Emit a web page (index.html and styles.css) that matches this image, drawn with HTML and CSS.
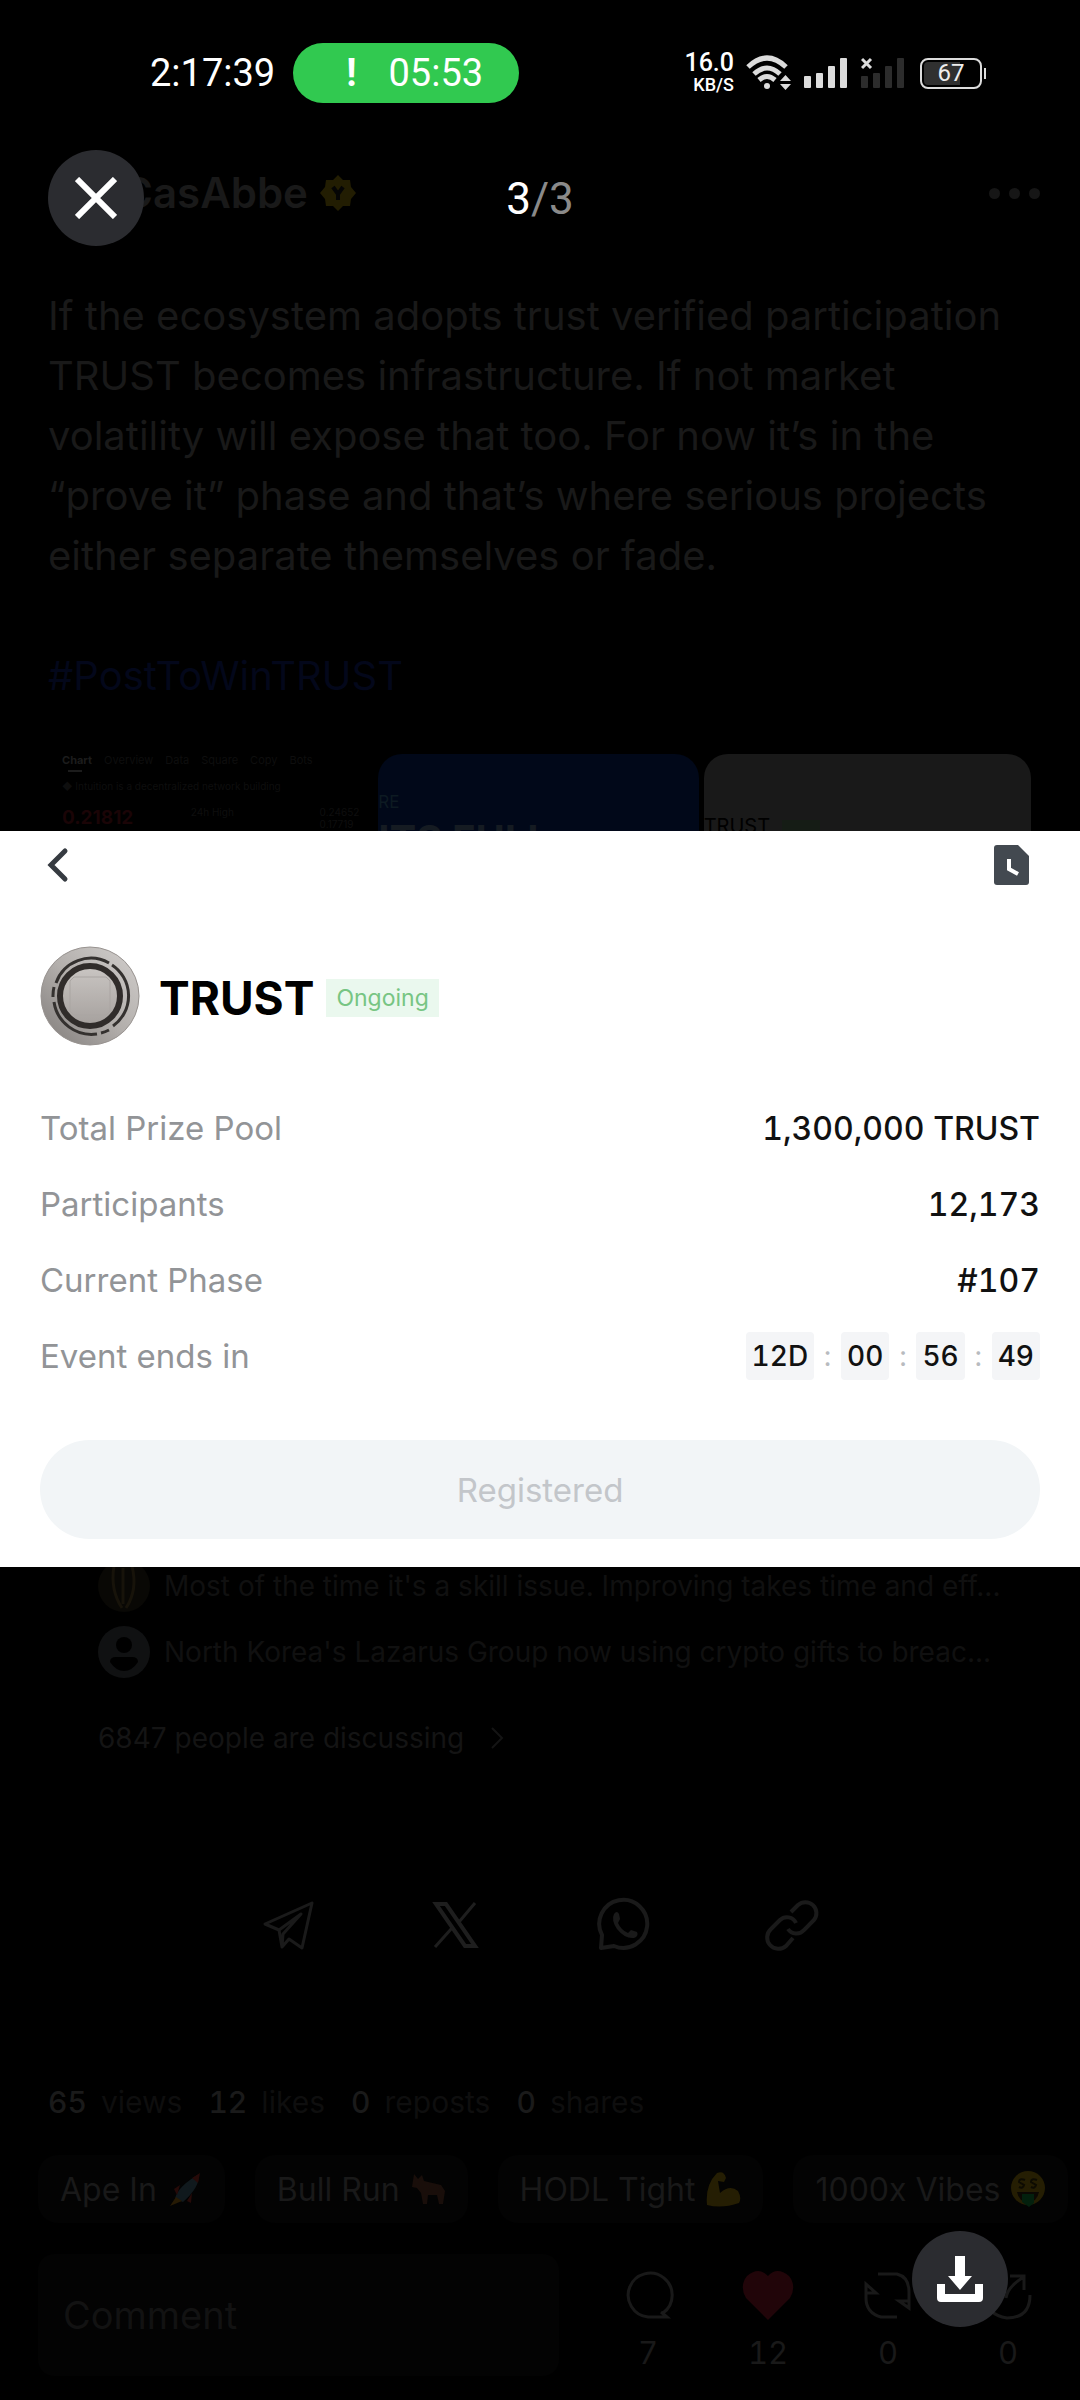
FILE: index.html
```
<!DOCTYPE html>
<html lang="en">
<head>
<meta charset="UTF-8">
<meta name="viewport" content="width=device-width, initial-scale=1">
<title>Post image 3/3</title>
<link rel="stylesheet" href="styles.css">
</head>
<body>

<div class="statusbar">
  <span class="clock">2:17:39</span>
  <span class="call"><b>!</b><span>05:53</span></span>
  <div class="signals">
    <span class="speed"><b>16.0</b><small>KB/S</small></span>
    <svg class="wifi" viewBox="0 0 46 36" width="46" height="36">
      <g fill="none" stroke="#dcdcdc" stroke-width="5">
        <path d="M2 12 Q21 -6 40 12"/>
        <path d="M8 19 Q21 7 34 19"/>
        <path d="M13 25 Q21 18 29 25"/>
      </g>
      <circle cx="21" cy="31" r="3" fill="#dcdcdc"/>
      <path d="M34 26 L39.500 20 L45 26 Z M34 29 L39.500 35 L45 29 Z" fill="#dcdcdc"/>
    </svg>
    <svg viewBox="0 0 44 32" width="44" height="32" fill="#dcdcdc">
      <rect x="0" y="19" width="7" height="12" rx="1"/><rect x="12" y="16" width="7" height="15" rx="1"/>
      <rect x="24" y="9" width="7" height="22" rx="1"/><rect x="36" y="1" width="7" height="30" rx="1"/>
    </svg>
    <svg class="sim2" viewBox="0 0 44 32" width="44" height="32" fill="#2c2c2c">
      <rect x="0" y="19" width="7" height="12" rx="1"/><rect x="12" y="16" width="7" height="15" rx="1"/>
      <rect x="24" y="9" width="7" height="22" rx="1"/><rect x="36" y="1" width="7" height="30" rx="1"/>
      <path d="M1 2 L10 11 M10 2 L1 11" stroke="#dcdcdc" stroke-width="3"/>
    </svg>
    <span class="battery">67</span>
  </div>
</div>

<header class="topbar">
  <button class="round close" aria-label="Close">
    <svg viewBox="0 0 42 42" width="42" height="42"><path d="M2 2 L40 40 M40 2 L2 40" stroke="#fff" stroke-width="6"/></svg>
  </button>
  <div class="author">
    <span>CasAbbe</span>
    <svg viewBox="0 0 36 36" width="36" height="36">
      <path d="M18 0 L23 5 L30 5 L31 12 L36 18 L31 24 L30 31 L23 31 L18 36 L13 31 L6 31 L5 24 L0 18 L5 12 L6 5 L13 5 Z" fill="#221d02"/>
      <path d="M13 12 L18 19 L23 12 M18 19 V25" fill="none" stroke="#050505" stroke-width="4"/>
    </svg>
  </div>
  <div class="counter">3<span>/3</span></div>
  <button class="more" aria-label="More"><i></i><i></i><i></i></button>
</header>

<main>
<section class="post">
  <p>If the ecosystem adopts trust verified participation<br>
  TRUST becomes infrastructure. If not market<br>
  volatility will expose that too. For now it’s in the<br>
  “prove it” phase and that’s where serious projects<br>
  either separate themselves or fade.</p>
  <p><a href="#tag">#PostToWinTRUST</a></p>
</section>

<div class="thumbs">
  <div class="thumb chart">
    <div class="tabs"><b>Chart</b><span>Overview</span><span>Data</span><span>Square</span><span>Copy</span><span>Bots</span></div>
    <div class="mark"></div>
    <div class="notice">◆ Intuition is a decentralized network building</div>
    <div class="price"><b>0.21812</b><span>24h High</span><span>0.24652<br>0.17719</span></div>
  </div>
  <div class="thumb blue"><span>RE</span><b>ITS FULL</b></div>
  <div class="thumb grey"><span>TRUST</span><i></i></div>
</div>

<section class="sheet">
  <div class="sheet-nav">
    <button aria-label="Back">
      <svg viewBox="0 0 36 41" width="36" height="41"><path d="M25 7 L11 21 L25 35" fill="none" stroke="#363b41" stroke-width="5" stroke-linecap="round"/></svg>
    </button>
    <button aria-label="History">
      <svg viewBox="0 0 36 41" width="36" height="41"><path d="M3 1 H24 L35 12 V38 Q35 41 32 41 H3 Q0 41 0 38 V4 Q0 1 3 1 Z" fill="#434950"/><path d="M15 15 V25 L24 30" fill="none" stroke="#fff" stroke-width="4"/></svg>
    </button>
  </div>

  <div class="token">
    <svg viewBox="0 0 100 100" width="100" height="100">
      <defs>
        <linearGradient id="metal" x1="1" y1="0" x2="0" y2="1"><stop offset="0" stop-color="#d2cfcd"/><stop offset=".5" stop-color="#b3afac"/><stop offset="1" stop-color="#7f7b79"/></linearGradient>
        <linearGradient id="core" x1="0" y1="0" x2="0" y2="1"><stop offset="0" stop-color="#cac6c3"/><stop offset="1" stop-color="#a5a09d"/></linearGradient>
      </defs>
      <circle cx="50" cy="50" r="49" fill="url(#metal)" stroke="#989390"/>
      <path d="M16 37 A37 37 0 0 1 69 17 M72 19 A37 37 0 0 1 73 80 M69 84 A39 39 0 0 1 61 87 M57 88 A38 38 0 0 1 14 56 M13 51 A37 37 0 0 1 14 41" fill="none" stroke="#34312f" stroke-width="3"/>
      <circle cx="50" cy="50" r="30" fill="url(#core)" stroke="#302c2a" stroke-width="6"/>
      <path d="M34 31 H66 L70 35 V65 L66 69 H34 L30 65 V35 Z" fill="none" stroke="#aaa5a2"/>
    </svg>
    <h1>TRUST</h1>
    <span class="badge">Ongoing</span>
  </div>

  <dl class="facts">
    <div><dt>Total Prize Pool</dt><dd>1,300,000 TRUST</dd></div>
    <div><dt>Participants</dt><dd>12,173</dd></div>
    <div><dt>Current Phase</dt><dd>#107</dd></div>
    <div><dt>Event ends in</dt><dd class="timer"><b>12D</b><i>:</i><b>00</b><i>:</i><b>56</b><i>:</i><b>49</b></dd></div>
  </dl>

  <button class="registered" disabled>Registered</button>
</section>

<section class="comments">
  <div class="comment">
    <svg viewBox="0 0 52 52" width="52" height="52"><circle cx="26" cy="26" r="26" fill="#090805"/><path d="M16 6 Q12 30 24 48 M34 6 Q40 30 28 48 M25 8 V44" fill="none" stroke="#17130a" stroke-width="3"/></svg>
    <span>Most of the time it's a skill issue. Improving takes time and eff...</span>
  </div>
  <div class="comment">
    <svg viewBox="0 0 52 52" width="52" height="52"><circle cx="26" cy="26" r="26" fill="#101112"/><circle cx="26" cy="19" r="8"/><path d="M12 36 Q12 31 18 31 H34 Q40 31 40 36 Q34 45 26 45 Q18 45 12 36 Z"/></svg>
    <span>North Korea's Lazarus Group now using crypto gifts to breac...</span>
  </div>
  <a class="discuss" href="#discuss">6847 people are discussing
    <svg viewBox="0 0 14 24" width="14" height="24"><path d="M2 2 L12 12 L2 22" fill="none" stroke="#141414" stroke-width="2"/></svg>
  </a>
</section>

<nav class="share">
  <a href="#telegram" aria-label="Telegram"><svg viewBox="0 0 56 56"><path d="M52 6 L5 27 L19 33 L22 50 L29 42 L42 51 Z M19 33 L41 17 L23 37 L22 50" fill="none" stroke="#1a1a1a" stroke-width="3" stroke-linejoin="round"/></svg></a>
  <a href="#x" aria-label="X"><svg viewBox="0 0 56 56"><path d="M8 7 H18 L47 49 H37 Z" fill="none" stroke="#1e1e1e" stroke-width="4"/><path d="M47 6 L31 25 M24 31 L7 50" stroke="#1e1e1e" stroke-width="3"/></svg></a>
  <a href="#whatsapp" aria-label="WhatsApp"><svg viewBox="0 0 56 56"><path d="M5 51 L6 38 A24 24 0 1 1 18 49 Z" fill="none" stroke="#1a1a1a" stroke-width="4" stroke-linejoin="round"/><path d="M18 17 Q21 13 23 17 L24 22 L22 26 Q25 33 32 36 L35 33 L41 35 Q43 39 38 41 Q29 42 21 32 Q15 23 18 17 Z" fill="#1a1a1a"/></svg></a>
  <a href="#link" aria-label="Copy link"><svg viewBox="0 0 56 56"><path d="M27 15 L34 8 A11 11 0 0 1 50 23 L40 33 A10 10 0 0 1 24 32 M32 26 A10 10 0 0 0 16 23 L7 32 A11 11 0 0 0 22 49 L29 41" fill="none" stroke="#1a1a1a" stroke-width="4"/></svg></a>
</nav>

<div class="stats">
  <span><b>65</b> views</span><span><b>12</b> likes</span><span><b>0</b> reposts</span><span><b>0</b> shares</span>
</div>

<div class="chips">
  <button>Ape In
    <svg viewBox="0 0 36 36"><path d="M8 28 Q10 16 32 3 Q33 16 16 31 Z" fill="#10191d"/><path d="M25 7 L33 2 L31 12 Z M7 18 L13 14 L10 24 Z M20 30 L25 22 L24 32 Z" fill="#260a08"/><path d="M9 26 L3 35 L15 30 Z" fill="#261a04"/></svg>
  </button>
  <button>Bull Run
    <svg viewBox="0 0 36 36"><path d="M4 3 L8 8 L12 4 L14 10 L31 14 L35 20 L33 33 H29 L27 24 L18 24 L17 33 H13 L11 22 L7 17 L2 16 Z" fill="#190e0a"/></svg>
  </button>
  <button>HODL Tight
    <svg viewBox="0 0 36 36"><path d="M12 2 Q19 -1 21 7 L19 11 L13 10 L15 22 Q25 13 33 20 Q37 27 34 32 Q17 38 2 34 Q0 14 12 2 Z" fill="#251e03"/></svg>
  </button>
  <button>1000x Vibes
    <svg viewBox="0 0 36 36"><circle cx="18" cy="17" r="17" fill="#251e03"/><path d="M7 21 H29 Q27 31 18 31 Q9 31 7 21 Z" fill="#0b0803"/><path d="M12 23 H24 V32 L19 36 L12 31 Z" fill="#03200d"/><path d="M15 9 Q9 7 9 11 L14 14 Q13 18 9 16 M27 9 Q21 7 21 11 L26 14 Q25 18 21 16" fill="none" stroke="#0d0b02" stroke-width="2"/></svg>
  </button>
</div>

<div class="bottombar">
  <input type="text" placeholder="Comment" aria-label="Comment">
  <button><svg viewBox="0 0 54 50"><path d="M42 43 A22 22 0 1 0 27 47 H46 L40 42" fill="none" stroke="#191919" stroke-width="3"/></svg>7</button>
  <button><svg viewBox="0 0 54 50"><path d="M27 50 L5 28 Q-2 16 6 6 Q18 -4 27 6 Q36 -4 48 6 Q56 16 49 28 Z" fill="#210509"/></svg>12</button>
  <button><svg viewBox="0 0 54 50"><path d="M17 4 H36 Q48 7 48 22 V38 L38 31 H47 M36 47 H20 Q5 43 5 28 V14 L15 23 H6" fill="none" stroke="#191919" stroke-width="3"/></svg>0</button>
  <button><svg viewBox="0 0 54 50"><path d="M25 28 Q27 16 43 7 M29 6 H43 V20 M49 25 Q49 48 26 48 Q5 45 5 25 Q7 10 20 5" fill="none" stroke="#191919" stroke-width="3"/></svg>0</button>
</div>
</main>

<button class="round download" aria-label="Download">
  <svg viewBox="0 0 46 46" width="46" height="46" fill="#fff"><path d="M18 0 H28 V20 H35 L23 34 L11 20 H18 Z"/><path d="M0 28 H8 V38 H38 V28 H46 V42 Q46 46 42 46 H4 Q0 46 0 42 Z"/></svg>
</button>

</body>
</html>
```
FILE: styles.css
```
* {
    box-sizing: border-box;
}

body {
    position: relative;
    margin: 0;
    background: #000;
    color: #191919;
    font-family: Inter, "Liberation Sans", sans-serif;
    overflow-x: hidden;
}

button {
    margin: 0;
    padding: 0;
    border: 0;
    background: none;
    color: inherit;
    font: inherit;
}

a {
    color: inherit;
    text-decoration: none;
}

svg {
    display: block;
    flex-shrink: 0;
}

p, h1, dl, dd {
    margin: 0;
}

/* status bar */
.statusbar {
    display: flex;
    align-items: center;
    height: 146px;
    padding: 0 98px 0 150px;
    color: #fff;
    font: 38px Roboto, sans-serif;
}

.call {
    display: flex;
    align-items: center;
    gap: 32px;
    height: 60px;
    margin-left: 18px;
    padding: 0 36px 0 53px;
    border-radius: 30px;
    background: #31c950;
}

.signals {
    display: flex;
    align-items: center;
    gap: 12px;
    margin-left: auto;
}

.speed {
    display: flex;
    flex-direction: column;
    align-items: flex-end;
    font-size: 25px;
    line-height: 24px;
}

.speed b {
    font-weight: 500;
}

.speed small {
    font-size: 18px;
    font-weight: 500;
    line-height: 20px;
}

.sim2 {
    margin: 0 3px 0 1px;
}

.battery {
    position: relative;
    width: 62px;
    height: 31px;
    border: 2px solid #dcdcdc;
    border-radius: 8px;
    background: linear-gradient(to right, #303030 67%, #000 67%) content-box;
    padding: 2px;
    color: #eee;
    font-size: 24px;
    line-height: 23px;
    text-align: center;
}

.battery::after {
    content: "";
    position: absolute;
    top: 8px;
    right: -6px;
    width: 2px;
    height: 11px;
    background: #dcdcdc;
}

/* viewer header */
.topbar {
    position: relative;
    display: grid;
    grid-template-columns: 1fr auto 1fr;
    align-items: center;
    height: 104px;
    padding: 0 40px;
}

.round {
    position: absolute;
    display: flex;
    align-items: center;
    justify-content: center;
    width: 96px;
    height: 96px;
    border-radius: 50%;
    background: #2b2c30;
}

.close {
    top: 4px;
    left: 48px;
}

.author {
    display: flex;
    align-items: center;
    gap: 12px;
    padding: 0 0 10px 82px;
    font-size: 42px;
    font-weight: 600;
    line-height: 50px;
}

.counter {
    padding-top: 2px;
    color: #fff;
    font: 44px/52px Roboto, sans-serif;
}

.counter span {
    color: #8a8a8a;
}

.more {
    display: flex;
    justify-self: end;
    gap: 9px;
    padding-bottom: 10px;
}

.more i {
    width: 11px;
    height: 11px;
    border-radius: 50%;
    background: #161616;
}

/* post */
.post {
    margin: 36px 48px 0;
    font-size: 40px;
    line-height: 60px;
    white-space: nowrap;
}

.post p + p {
    margin-top: 60px;
    color: #03071a;
}

.thumbs {
    display: grid;
    grid-template-columns: 325fr 320fr 327fr;
    gap: 5px;
    height: 77px;
    margin: 48px 49px 0 48px;
    overflow: hidden;
}

.thumb {
    height: 320px;
    border-radius: 24px;
    overflow: hidden;
}

.chart {
    padding: 0 14px;
    color: #0e0e0e;
    font-size: 10px;
    line-height: 12px;
}

.tabs {
    display: flex;
    gap: 12px;
    font-size: 11px;
}

.tabs b {
    color: #1c1c1c;
}

.mark {
    width: 14px;
    height: 2px;
    margin: 4px 0 8px 6px;
    background: #1c1c1c;
}

.price {
    display: grid;
    grid-template-columns: 1fr 1fr auto;
    margin-top: 14px;
}

.price b {
    color: #1a0406;
    font-size: 19px;
    line-height: 24px;
}

.blue {
    padding-top: 38px;
    background: #010819;
    color: #0d1a22;
    font-size: 17px;
    line-height: 20px;
}

.blue b {
    display: block;
    margin-top: 6px;
    color: #151b22;
    font-size: 40px;
    line-height: 44px;
}

.grey {
    display: flex;
    gap: 12px;
    padding-top: 60px;
    background: #191919;
    color: #000;
    font-size: 20px;
    line-height: 24px;
}

.grey i {
    width: 38px;
    height: 14px;
    margin-top: 6px;
    background: #151c15;
}

/* campaign image */
.sheet {
    position: relative;
    z-index: 1;
    padding: 13px 40px 28px;
    background: #fff;
    color: #111;
}

.sheet-nav {
    display: flex;
    justify-content: space-between;
    padding: 0 10px 0 0;
}

.token {
    display: flex;
    align-items: center;
    margin-top: 61px;
}

.token h1 {
    margin: 4px 12px 0 19px;
    color: #000;
    font-size: 46px;
    line-height: 58px;
}

.badge {
    margin-top: 4px;
    padding: 0 10px;
    background: #eaf8ee;
    color: #77c583;
    font-size: 23px;
    line-height: 38px;
}

.facts {
    margin-top: 44px;
    font-size: 33px;
}

.facts > div {
    display: flex;
    align-items: center;
    justify-content: space-between;
    height: 76px;
}

.facts dt {
    color: #929497;
}

.facts dd {
    font-size: 32px;
    font-weight: 500;
    font-variant-numeric: tabular-nums;
}

.facts .timer {
    display: flex;
    align-items: center;
    font-size: 28px;
}

.timer b {
    padding: 0 6px;
    border-radius: 4px;
    background: #f4f5f7;
    font-weight: 500;
    line-height: 48px;
}

.timer i {
    width: 27px;
    color: #b8bbbf;
    font-style: normal;
    font-weight: 400;
    text-align: center;
}

.registered {
    display: block;
    width: 100%;
    height: 99px;
    margin-top: 46px;
    border-radius: 50px;
    background: #f2f5f7;
    color: #c3c6ca;
    font-size: 33px;
}

/* comments under the image */
.comments {
    margin-top: -7px;
    padding: 0 98px;
    color: #141414;
    font-size: 28px;
    line-height: 36px;
    white-space: nowrap;
}

.comment {
    display: flex;
    align-items: center;
    gap: 14px;
    margin-bottom: 14px;
    color: #101010;
}

.discuss {
    display: flex;
    align-items: center;
    gap: 26px;
    margin-top: 42px;
}

.share {
    display: flex;
    justify-content: center;
    gap: 112px;
    margin-top: 141px;
}

.share svg {
    width: 56px;
    height: 56px;
}

.stats {
    display: flex;
    gap: 26px;
    margin: 131px 48px 0;
    color: #0e0e0e;
    font-size: 30px;
    line-height: 36px;
    font-variant-numeric: tabular-nums;
}

.stats b {
    margin-right: 6px;
    color: #1a1a1a;
    font-weight: 500;
}

.chips {
    display: flex;
    gap: 30px;
    margin: 35px 0 0 38px;
    overflow: hidden;
}

.chips button {
    display: flex;
    flex-shrink: 0;
    align-items: center;
    gap: 10px;
    height: 68px;
    padding: 0 22px;
    border-radius: 20px;
    background: #030303;
    font-size: 32px;
    white-space: nowrap;
}

.chips svg {
    width: 36px;
    height: 36px;
}

.bottombar {
    display: flex;
    margin: 31px 12px 0 38px;
    padding-bottom: 23px;
}

.bottombar input {
    flex: 1;
    min-width: 0;
    height: 122px;
    margin-right: 29px;
    padding: 0 25px;
    border: 0;
    border-radius: 16px;
    background: #030303;
    color: #191919;
    font: 38px Inter, "Liberation Sans", sans-serif;
}

.bottombar input::placeholder {
    color: #121212;
}

.bottombar button {
    display: flex;
    flex-direction: column;
    align-items: center;
    gap: 14px;
    width: 120px;
    padding-top: 16px;
    font-size: 31px;
    line-height: 38px;
    font-variant-numeric: tabular-nums;
}

.bottombar svg {
    width: 54px;
    height: 50px;
}

.download {
    right: 72px;
    bottom: 72px;
    z-index: 2;
}
```
